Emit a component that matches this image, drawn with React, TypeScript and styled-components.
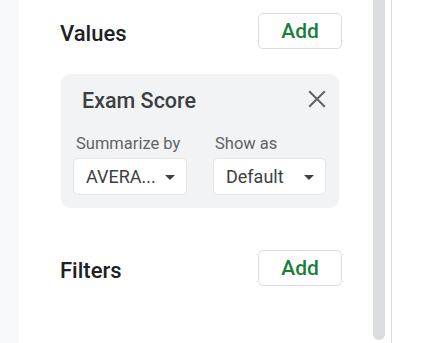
import * as React from 'react';
import styled, { createGlobalStyle } from 'styled-components';

const GlobalStyle = createGlobalStyle`
  html, body {
    margin: 0;
    padding: 0;
    background: #ffffff;
    font-family: Roboto, "Noto Sans", Arial, sans-serif;
  }
  *, *::before, *::after {
    box-sizing: border-box;
  }
`;

const Screen = styled.div`
  display: flex;
  flex-direction: row;
  width: 436px;
  height: 343px;
  overflow: hidden;
`;

const Gutter = styled.div`
  width: 19px;
  flex-shrink: 0;
  background: #f8f9fa;
`;

const Panel = styled.div`
  width: 354px;
  flex-shrink: 0;
  padding: 13px 31px 0 41px;
  display: flex;
  flex-direction: column;
  background: #ffffff;
`;

const SectionRow = styled.div<{ $gap: number }>`
  display: flex;
  align-items: center;
  justify-content: space-between;
  height: 36px;
  margin-top: ${(p) => p.$gap}px;
`;

const SectionTitle = styled.div`
  font-size: 22px;
  font-weight: 500;
  color: #202124;
  padding-top: 4px;
`;

const AddButton = styled.button`
  width: 84px;
  height: 36px;
  border: 1px solid #dadce0;
  border-radius: 5px;
  background: #ffffff;
  color: #188038;
  font-family: inherit;
  font-size: 21px;
  font-weight: 500;
  padding: 0;
  cursor: pointer;
`;

const Card = styled.div`
  margin-top: 25px;
  margin-right: 3px;
  margin-left: 1px;
  height: 134px;
  background: #f1f3f4;
  border-radius: 9px;
  padding: 11px 8px 0 12px;
  display: flex;
  flex-direction: column;
`;

const CardHeader = styled.div`
  display: flex;
  align-items: center;
  justify-content: space-between;
  height: 28px;
  padding-left: 9px;
`;

const CardTitle = styled.div`
  font-size: 21.5px;
  font-weight: 500;
  color: #3c4043;
  padding-top: 2px;
`;

const CloseButton = styled.button`
  width: 28px;
  height: 28px;
  padding: 0;
  border: none;
  background: transparent;
  color: #5f6368;
  display: flex;
  align-items: center;
  justify-content: center;
  cursor: pointer;
`;

const Fields = styled.div`
  display: flex;
  gap: 26px;
  margin-top: 21px;
`;

const Field = styled.div`
  display: flex;
  flex-direction: column;
`;

const FieldLabel = styled.div<{ $indent: number }>`
  font-size: 16.5px;
  color: #5f6368;
  padding-left: ${(p) => p.$indent}px;
  height: 20px;
  line-height: 20px;
`;

const Select = styled.div<{ $width: number }>`
  margin-top: 4px;
  width: ${(p) => p.$width}px;
  height: 37px;
  background: #ffffff;
  border: 1px solid #e3e5e8;
  border-radius: 5px;
  display: flex;
  align-items: center;
  justify-content: space-between;
  padding: 0 4px 0 12px;
`;

const SelectText = styled.span`
  font-size: 18px;
  color: #3c4043;
`;

const Scrollbar = styled.div`
  width: 12px;
  flex-shrink: 0;
  height: 340px;
  background: #dadce0;
  border-radius: 0 0 6px 6px;
`;

const Spacer = styled.div`
  width: 7px;
  flex-shrink: 0;
  border-right: 1px solid #dadce0;
`;

const ArrowDown = () => (
  <svg width="24" height="24" viewBox="0 0 24 24">
    <path d="M7 10l5 5 5-5z" fill="#3c4043" />
  </svg>
);

const CloseIcon = () => (
  <svg width="28" height="28" viewBox="0 0 24 24">
    <path
      d="M5.3 5.3L18.7 18.7M18.7 5.3L5.3 18.7"
      stroke="currentColor"
      strokeWidth="1.7"
      fill="none"
    />
  </svg>
);

export default function App() {
  return (
    <Screen>
      <GlobalStyle />
      <Gutter />
      <Panel>
        <SectionRow $gap={0}>
          <SectionTitle>Values</SectionTitle>
          <AddButton>Add</AddButton>
        </SectionRow>
        <Card>
          <CardHeader>
            <CardTitle>Exam Score</CardTitle>
            <CloseButton aria-label="Remove">
              <CloseIcon />
            </CloseButton>
          </CardHeader>
          <Fields>
            <Field>
              <FieldLabel $indent={3}>Summarize by</FieldLabel>
              <Select $width={114}>
                <SelectText>AVERA...</SelectText>
                <ArrowDown />
              </Select>
            </Field>
            <Field>
              <FieldLabel $indent={2}>Show as</FieldLabel>
              <Select $width={113}>
                <SelectText>Default</SelectText>
                <ArrowDown />
              </Select>
            </Field>
          </Fields>
        </Card>
        <SectionRow $gap={42}>
          <SectionTitle>Filters</SectionTitle>
          <AddButton>Add</AddButton>
        </SectionRow>
      </Panel>
      <Scrollbar />
      <Spacer />
    </Screen>
  );
}
